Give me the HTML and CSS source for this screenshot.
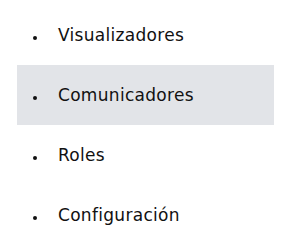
FILE: index.html
```html
<!DOCTYPE html>
<html lang="es">
<head>
    <meta charset="UTF-8">
    <meta name="viewport" content="width=device-width, initial-scale=1.0">
    <title>Menú</title>
    <link rel="stylesheet" href="styles.css">
</head>
<body>
    <ul class="menu">
        <li><a href="#">Visualizadores</a></li>
        <li class="activo"><a href="#">Comunicadores</a></li>
        <li><a href="#">Roles</a></li>
        <li><a href="#">Configuración</a></li>
    </ul>
</body>
</html>
```

FILE: styles.css
```css
body {
    font-family: "DejaVu Sans", Arial, sans-serif;
    margin: 0;
    padding: 5px 12px 0 17px;
    background: #fff;
    color: #111;
}

.menu {
    list-style: none;
    margin: 0;
    padding: 0;
}

.menu li {
    height: 60px;
    display: flex;
    align-items: center;
    padding-left: 16px;
}

/* punto de la lista */
.menu li::before {
    content: "";
    width: 4px;
    height: 4px;
    border-radius: 50%;
    background: #111;
    margin: 6px 21px 0 0;
}

.menu li.activo {
    background: #e2e4e8;
}

.menu a {
    color: #111;
    text-decoration: none;
    font-size: 17px;
    letter-spacing: 0.3px;
}
```
